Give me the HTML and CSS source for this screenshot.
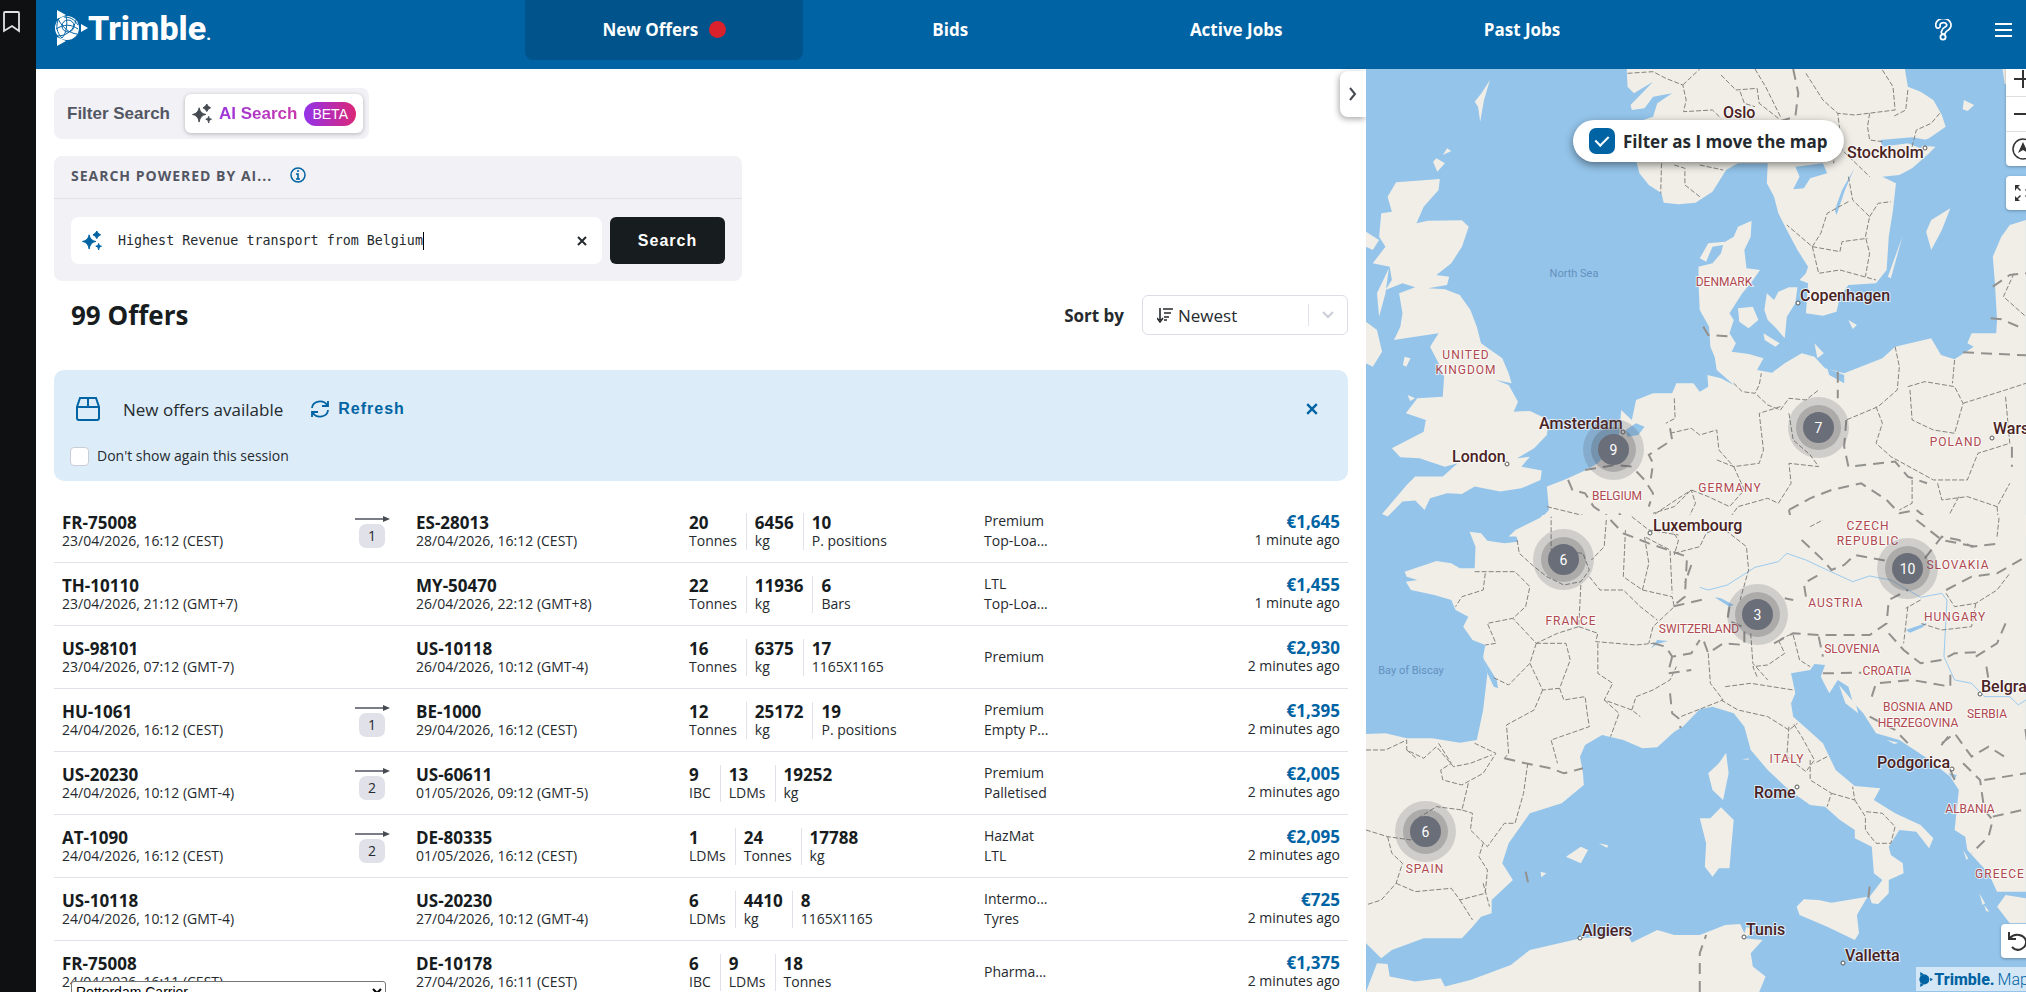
FILE: index.html
```html
<!DOCTYPE html>
<html lang="en">
<head>
	<meta charset="UTF-8" />
	<meta name="viewport" content="width=device-width, initial-scale=1.0" />
	<title>New Offers</title>
	<link rel="stylesheet" href="styles.css">
</head>
<body>
	<!-- shared icons -->
	<svg class="defs" aria-hidden="true">
		<symbol id="globe" viewBox="0 0 34 36">
			<path fill="currentColor" d="M3 0l9 5-9 4zM3 27l9 4-9 5zM27 14l7 4-7 4z"/>
			<circle cx="13" cy="18" r="12" fill="currentColor"/>
			<g class="globe-lines">
				<path d="M5 8c-4 8-2 15 3 20M8 28c4-4 6-13 4-22M2 19c8-5 15-5 22 0M4 9c5 9 11 14 19 15M22 10c-2 10-9 16-19 16M10 7c6 0 10 2 14 8"/>
				<circle cx="14" cy="16" r="6"/>
			</g>
		</symbol>
		<symbol id="sparkle" viewBox="0 0 20 20">
			<path fill="currentColor" d="M7 4q1 6 7 7q-6 1-7 8q-1-7-7-8q6-1 7-7zM15 0q1 3 4 4q-3 1-4 4q-1-3-4-4q3-1 4-4zM17 13q0 3 3 3q-3 0-3 4q0-4-3-4q3 0 3-3z" stroke="currentColor" stroke-linejoin="round"/>
		</symbol>
		<symbol id="cross" viewBox="0 0 10 10">
			<path d="M1 1l8 8M9 1l-8 8" stroke="currentColor" stroke-width="2" fill="none"/>
		</symbol>
		<symbol id="arrow" viewBox="0 0 35 8">
			<path d="M0 4h30" stroke="#5b5d68" stroke-width="1.6"/>
			<path d="M28 1l7 3-7 3z" fill="#464b52"/>
		</symbol>
	</svg>

	<div class="app">
		<aside class="rail">
			<button type="button" aria-label="Bookmarks">
				<svg width="17" height="22" viewBox="0 0 17 22"><path d="M1 2q0-1 1-1h13q1 0 1 1v18l-7-5-8 5z" fill="none" stroke="#e3e3e3" stroke-width="1.8"/></svg>
			</button>
		</aside>

		<div class="page">
			<header class="topbar">
				<a href="#" class="logo" aria-label="Trimble"><svg width="34" height="36"><use href="#globe"/></svg><span>Trimble<small>.</small></span></a>
				<nav class="tabs">
					<a href="#" class="tab active">New Offers <i class="dot"></i></a>
					<a href="#" class="tab">Bids</a>
					<a href="#" class="tab">Active Jobs</a>
					<a href="#" class="tab">Past Jobs</a>
				</nav>
				<div class="tools">
					<button type="button" aria-label="Help">
						<svg width="17" height="22" viewBox="0 0 17 22" fill="none" stroke="#fff"><path d="M3 7a5.500 4.500 0 1 1 8 3q-2 1-2.500 3" stroke-width="6" stroke-linecap="round"/><path d="M3 7a5.500 4.500 0 1 1 8 3q-2 1-2.500 3" stroke="#0063a3" stroke-width="2.600" stroke-linecap="round"/><circle cx="8" cy="18" r="2.600" fill="#0063a3" stroke-width="1.800"/></svg>
					</button>
					<button type="button" aria-label="Menu">
						<svg width="17" height="14" viewBox="0 0 17 14"><path d="M0 1h17M0 7h17M0 13h17" stroke="#fff" stroke-width="2"/></svg>
					</button>
				</div>
			</header>

			<div class="content">
				<main class="offers">
					<div class="switch">
						<button type="button" class="switch-btn">Filter Search</button>
						<button type="button" class="switch-btn on">
							<svg width="20" height="19"><use href="#sparkle"/></svg>
							<span class="ai">AI Search</span>
							<span class="beta">BETA</span>
						</button>
					</div>

					<form class="search">
						<div class="search-head">
							<label for="prompt">SEARCH POWERED BY AI...</label>
							<svg width="16" height="16" viewBox="0 0 16 16"><circle cx="8" cy="8" r="7" fill="none" stroke="#0063a3" stroke-width="1.500"/><path d="M8 3v2M6 7h2v5M6 12h4" stroke="#0063a3" stroke-width="1.600" fill="none"/></svg>
						</div>
						<div class="search-body">
							<div class="prompt">
								<svg width="20" height="19"><use href="#sparkle"/></svg>
								<input type="text" id="prompt" value="Highest Revenue transport from Belgium" />
								<i class="caret"></i>
								<button type="button" class="clear" aria-label="Clear"><svg width="10" height="10"><use href="#cross"/></svg></button>
							</div>
							<button type="submit" class="go">Search</button>
						</div>
					</form>

					<div class="title-row">
						<h1>99 Offers</h1>
						<div class="sort">
							<label for="sort">Sort by</label>
							<div class="sort-box">
								<svg class="sort-icon" width="16" height="16" viewBox="0 0 16 16" fill="none" stroke="#252a2e" stroke-width="1.600"><path d="M3 1v12M0 11l3 4 3-4M6 2h10M7 6h7M7 10h5M7 13h3"/></svg>
								<select id="sort">
									<option>Newest</option>
								</select>
								<svg class="sort-chev" width="14" height="8" viewBox="0 0 14 8"><path d="M2 1l5 5 5-5" fill="none" stroke="#cbcdd6" stroke-width="2"/></svg>
							</div>
						</div>
					</div>

					<section class="notice">
						<div class="notice-row">
							<svg width="24" height="24" viewBox="0 0 24 24" fill="none" stroke="#0063a3" stroke-width="2"><path d="M4 1h16l3 9v11q0 2-2 2H3q-2 0-2-2V10zM1 10h22M12 1v9"/></svg>
							<span class="notice-text">New offers available</span>
							<button type="button" class="refresh">
								<svg width="18" height="18" viewBox="0 0 18 18" fill="none" stroke="#0063a3" stroke-width="1.800"><path d="M1 8a8 7 0 0 1 15-3M17 1v5h-6M17 10a8 7 0 0 1-15 3M1 17v-5h6"/></svg>
								Refresh
							</button>
							<button type="button" class="close" aria-label="Close"><svg width="12" height="12"><use href="#cross"/></svg></button>
						</div>
						<label class="again"><input type="checkbox" /> Don't show again this session</label>
					</section>

					<table class="list">
						<colgroup><col class="c-from"><col class="c-via"><col class="c-to"><col class="c-load"><col class="c-req"><col></colgroup>
						<tbody>
							<tr>
								<td><b>FR-75008</b><span>23/04/2026, 16:12 (CEST)</span></td>
								<td class="via"><svg width="35" height="8"><use href="#arrow"/></svg><em>1</em></td>
								<td><b>ES-28013</b><span>28/04/2026, 16:12 (CEST)</span></td>
								<td><div class="load"><p><b>20</b><span>Tonnes</span></p><p><b>6456</b><span>kg</span></p><p><b>10</b><span>P. positions</span></p></div></td>
								<td class="req"><span>Premium</span><span>Top-Loa...</span></td>
								<td class="price"><b>€1,645</b><span>1 minute ago</span></td>
							</tr>
							<tr>
								<td><b>TH-10110</b><span>23/04/2026, 21:12 (GMT+7)</span></td>
								<td class="via"></td>
								<td><b>MY-50470</b><span>26/04/2026, 22:12 (GMT+8)</span></td>
								<td><div class="load"><p><b>22</b><span>Tonnes</span></p><p><b>11936</b><span>kg</span></p><p><b>6</b><span>Bars</span></p></div></td>
								<td class="req"><span>LTL</span><span>Top-Loa...</span></td>
								<td class="price"><b>€1,455</b><span>1 minute ago</span></td>
							</tr>
							<tr>
								<td><b>US-98101</b><span>23/04/2026, 07:12 (GMT-7)</span></td>
								<td class="via"></td>
								<td><b>US-10118</b><span>26/04/2026, 10:12 (GMT-4)</span></td>
								<td><div class="load"><p><b>16</b><span>Tonnes</span></p><p><b>6375</b><span>kg</span></p><p><b>17</b><span>1165X1165</span></p></div></td>
								<td class="req"><span>Premium</span></td>
								<td class="price"><b>€2,930</b><span>2 minutes ago</span></td>
							</tr>
							<tr>
								<td><b>HU-1061</b><span>24/04/2026, 16:12 (CEST)</span></td>
								<td class="via"><svg width="35" height="8"><use href="#arrow"/></svg><em>1</em></td>
								<td><b>BE-1000</b><span>29/04/2026, 16:12 (CEST)</span></td>
								<td><div class="load"><p><b>12</b><span>Tonnes</span></p><p><b>25172</b><span>kg</span></p><p><b>19</b><span>P. positions</span></p></div></td>
								<td class="req"><span>Premium</span><span>Empty P...</span></td>
								<td class="price"><b>€1,395</b><span>2 minutes ago</span></td>
							</tr>
							<tr>
								<td><b>US-20230</b><span>24/04/2026, 10:12 (GMT-4)</span></td>
								<td class="via"><svg width="35" height="8"><use href="#arrow"/></svg><em>2</em></td>
								<td><b>US-60611</b><span>01/05/2026, 09:12 (GMT-5)</span></td>
								<td><div class="load"><p><b>9</b><span>IBC</span></p><p><b>13</b><span>LDMs</span></p><p><b>19252</b><span>kg</span></p></div></td>
								<td class="req"><span>Premium</span><span>Palletised</span></td>
								<td class="price"><b>€2,005</b><span>2 minutes ago</span></td>
							</tr>
							<tr>
								<td><b>AT-1090</b><span>24/04/2026, 16:12 (CEST)</span></td>
								<td class="via"><svg width="35" height="8"><use href="#arrow"/></svg><em>2</em></td>
								<td><b>DE-80335</b><span>01/05/2026, 16:12 (CEST)</span></td>
								<td><div class="load"><p><b>1</b><span>LDMs</span></p><p><b>24</b><span>Tonnes</span></p><p><b>17788</b><span>kg</span></p></div></td>
								<td class="req"><span>HazMat</span><span>LTL</span></td>
								<td class="price"><b>€2,095</b><span>2 minutes ago</span></td>
							</tr>
							<tr>
								<td><b>US-10118</b><span>24/04/2026, 10:12 (GMT-4)</span></td>
								<td class="via"></td>
								<td><b>US-20230</b><span>27/04/2026, 10:12 (GMT-4)</span></td>
								<td><div class="load"><p><b>6</b><span>LDMs</span></p><p><b>4410</b><span>kg</span></p><p><b>8</b><span>1165X1165</span></p></div></td>
								<td class="req"><span>Intermo...</span><span>Tyres</span></td>
								<td class="price"><b>€725</b><span>2 minutes ago</span></td>
							</tr>
							<tr>
								<td><b>FR-75008</b><span>24/04/2026, 16:11 (CEST)</span></td>
								<td class="via"></td>
								<td><b>DE-10178</b><span>27/04/2026, 16:11 (CEST)</span></td>
								<td><div class="load"><p><b>6</b><span>IBC</span></p><p><b>9</b><span>LDMs</span></p><p><b>18</b><span>Tonnes</span></p></div></td>
								<td class="req"><span>Pharma...</span></td>
								<td class="price"><b>€1,375</b><span>2 minutes ago</span></td>
							</tr>
						</tbody>
					</table>

					<button type="button" class="collapse" aria-label="Collapse list"><svg width="8" height="14" viewBox="0 0 8 14"><path d="M1 1l5 6-5 6" fill="none" stroke="#464b52" stroke-width="2"/></svg></button>
				</main>

				<section class="map" aria-label="Map">
					<svg class="map-canvas">
						<!-- northern half -->
						<g transform="translate(-6 -19) scale(.4247 .3333)">
							<g class="land">
								<path d="M85 397L188 387 185 420 150 470 133 520 160 512 240 511 256 530 240 590 215 640 180 675 210 680 205 705 160 715 200 718 235 735 260 780 275 830 285 880 335 925 350 970 357 1000 320 990 350 1005 372 1055 362 1085 400 1083 445 1110 440 1155 410 1195 370 1225 400 1220 380 1250 428 1262 425 1290 380 1315 330 1325 270 1310 240 1332 205 1330 165 1345 152 1380 130 1352 100 1355 65 1400 52 1392 80 1350 110 1305 130 1280 195 1280 230 1240 200 1250 175 1240 140 1225 95 1222 75 1195 150 1145 155 1110 108 1090 135 1045 195 1040 198 980 185 940 165 890 185 850 130 860 80 870 95 830 100 790 92 730 130 712 100 700 60 720 75 690 70 650 30 640 60 590 45 560 50 490 75 485 65 440Z"/>
								<path d="M14 815L40 840 52 905 30 950 14 940zM14 545L45 570 30 600 14 590zM40 730L68 655 60 730 45 800zM105 920l14 5-10 25-8-5zM112 1035l18 10-12 8z"/>
								<path d="M306 90L292 150 283 215 278 170 270 155 286 130zM205 295l10 8-20 12zM180 325l20 15-18 25-10-30z"/>
								<path d="M628 57L630 110 645 130 690 95 660 135 637 165 640 180 670 175 690 140 735 130 700 160 690 200 655 215 650 330 658 370 680 405 710 430 715 458 750 463 790 458 830 425 862 360 890 340 960 340 958 400 975 440 985 490 1005 540 1030 600 1055 650 1050 670 1035 690 1055 700 1050 790 1090 797 1122 785 1130 740 1150 705 1215 700 1240 660 1245 560 1255 480 1262 400 1230 380 1270 375 1300 355 1340 310 1355 290 1300 285 1340 265 1379 230 1370 195 1350 150 1320 125 1290 110 1283 57Z"/>
								<path d="M922 512L920 560 905 600 910 655 942 660 920 700 900 730 885 760 870 790 880 810 870 850 885 880 875 905 915 912 950 925 935 960 970 968 1000 940 1040 910 1070 920 1095 955 1140 970 1230 925 1260 890 1345 865 1368 915 1400 928 1445 890 1430 880 1440 850 1498 850 1500 810 1495 700 1490 620 1510 560 1530 525 1568 510V1460H350L366 1440 430 1400 445 1380 440 1310 480 1290 530 1262 560 1240 590 1200 610 1160 615 1080 640 1110 650 1050 690 1030 735 1030 745 1000 785 1000 800 1025 820 1010 818 975 850 985 880 1005 840 960 835 920 825 890 822 830 800 780 797 700 797 650 830 640 850 610 855 585 830 590 815 635 800 625 820 580 860 575 880 560 890 530Z"/>
								<path d="M890 775L925 770 938 810 915 835 893 815zM958 730L975 750 985 725 1010 712 1030 712 1025 760 1005 800 1000 865 980 835 960 810 952 780zM950 850l38 30-10 10-25-20zM1345 510L1390 475 1370 540 1345 600 1333 545zM1277 560L1250 685 1243 680zM1150 810l20 15-10 12zM1070 880l22 30-15 15zM1422 150l24 15-15 18-12-5zM1513 57h55v60l-50-15z"/>
							</g>
							<g class="water">
								<path d="M1025 350L1090 340 1100 370 1060 385 1045 415 1020 418 1035 380zM1163 358L1142 420 1122 495 1118 480 1135 420zM1225 270L1300 262 1335 270 1320 295 1290 280 1230 290zM625 1140L650 1120 670 1130 655 1155 630 1160zM1100 955l40 20v25l-35-25z"/>
							</g>
							<g class="region">
								<path d="M630 70L690 65 720 85 760 105 768 150 762 185 830 180 850 205M760 105L800 57M850 75L885 120 935 115 940 160 985 205M930 57L955 110 990 200M895 125L905 160 930 170M1050 70L1090 150 1125 190 1135 300 1200 380M1230 60L1255 110 1260 180 1165 195 1125 190M1200 190L1195 230 1200 270 1230 275M1365 190L1345 220 1310 240 1300 290M1290 120L1285 180 1255 200M710 340L708 430M740 345L765 355 765 405 800 440M800 345L855 360M1150 380L1160 450 1200 500 1190 560 1200 610 1190 680M1200 500L1220 460 1250 455M1150 455L1100 490 1085 550 1065 590 1005 525M1065 590L1130 605 1135 575 1195 565M1065 590L1080 670 1130 660 1215 690M1120 290L1115 340"/>
								<path d="M880 1000L900 1025 930 1030 940 1005 945 970M935 1035L960 1065 990 1080 1010 1045 1050 1050 1080 1020M990 1070L940 1090 950 1200 940 1240 880 1250 840 1230M1010 1090L1020 1170 1060 1215 1080 1250 1010 1240 1015 1300 985 1360 960 1345 890 1370 850 1440M880 1250L905 1320 870 1370 820 1340 780 1320 740 1370 690 1390M1260 890L1270 950 1265 1020 1220 1070 1145 1110M1290 1010L1330 995 1400 1010 1420 1060 1400 1150 1350 1140 1300 1110 1295 1020M1420 1060L1520 1020 1568 1000M1400 930L1395 1000M1215 1070L1230 1120 1215 1180 1250 1220 1350 1290 1430 1290 1455 1210 1530 1180 1520 1040M1300 1290L1300 1360 1270 1380M1360 1300L1370 1350 1430 1340 1500 1370 1530 1300M440 1370L520 1395 580 1410M730 1150L780 1135 800 1155 840 1140 845 1200 880 1250M740 1045L742 1105 720 1120M1410 1340L1385 1400 1400 1440M1500 1370L1505 1440M1540 670L1515 740 1568 800M640 1440L720 1370 780 1320 790 1360 760 1440"/>
							</g>
							<g class="country">
								<path d="M1020 57L1032 130 1025 200 985 215M808 830L820 855 880 860M1125 965V1045M1145 1110L1140 1190 1150 1250 1260 1235 1290 1280 1335 1300M1420 907L1568 916M1490 710L1530 675 1568 670M1485 805L1510 808 1560 835M490 1290L500 1320 530 1330 550 1370 585 1400M730 1135L735 1170 680 1215 690 1240 685 1285M530 1260L600 1245 640 1250 670 1290 690 1330 680 1370M1010 1380L1060 1345 1110 1320 1180 1300 1240 1350 1270 1390 1310 1380 1350 1420M1010 1380L1020 1440M610 1390L640 1440M1535 1190V1250"/>
							</g>
						</g>
						<!-- southern half -->
						<g transform="translate(-6 441) scale(.4247 .3333)">
							<g class="land">
								<path d="M430 15L420 30 365 65 372 95 340 100 300 92 285 70 258 65 272 110 270 175 235 175 215 160 180 153 140 170 105 185 110 200 135 210 108 215 120 240 175 255 215 270 225 300 255 320 243 350 265 390 295 405 290 440 300 490 290 600 275 690 235 698 170 685 110 685 60 670 14 672V1300L50 1345 75 1320 150 1285 240 1285 265 1250 285 1220 310 1210 310 1170 360 1110 335 1060 350 1000 400 910 475 880 527 825 525 790 518 740 530 705 570 675 620 690 665 715 700 712 740 665 760 650 800 598 830 590 880 610 905 650 920 720 960 780 1010 840 1060 885 1095 890 1130 930 1165 960 1165 985 1205 1010 1210 1090 1230 1110 1200 1160 1205 1180 1220 1182 1245 1150 1245 1110 1280 1090 1278 1060 1250 1035 1245 1010 1270 960 1310 965 1340 1015 1350 985 1320 945 1260 910 1210 870 1225 835 1165 828 1120 780 1090 700 1060 665 1020 620 1015 580 1025 550 1015 490 1060 480 1070 462 1095 465 1085 500 1105 550 1125 510 1150 530 1160 575 1185 610 1215 670 1270 690 1330 740 1390 800 1410 840 1400 960 1425 980 1430 1020 1480 1090 1500 1145 1568 1145V15Z"/>
								<path d="M1500 1190L1520 1155 1568 1165V1240H1530zM862 728L868 790 855 870 830 840 820 790 845 760zM850 892L880 930 875 1000 870 1075 845 1075 830 1100 812 1070 815 1000 800 925 825 925zM1195 1160L1170 1215 1175 1270 1165 1290 1100 1250 1035 1215 1028 1190 1045 1168 1080 1170 1110 1178zM485 1040L520 1010 537 1020 520 1060zM562 1000l22 6-2 8zM425 1085l14 5-12 12zM1128 525l40 60 5 25-30-30zM1420 1020l12 25-4 5zM1458 1150l14 30-6 5zM1470 1185l12 20-8-2zM1240 690l28 8-10 4zM900 748l16-3-2 4z"/>
								<path d="M14 1446L40 1360 65 1362 70 1400 130 1415 190 1405 200 1430 260 1410 355 1365 400 1320 520 1285 630 1275 640 1298 700 1260 740 1275 800 1275 860 1245 895 1242 905 1270 910 1250 930 1262 905 1285 948 1290 920 1330 925 1370 955 1400 940 1446Z"/>
							</g>
							<g class="water">
								<path d="M835 262L850 265 880 285 870 290zM685 415L700 390 725 393 700 402zM1285 360L1335 338 1325 352 1295 368zM1385 790l20 5-5 15zM290 445L322 510 325 535 315 530 300 490z"/>
							</g>
							<path class="river" d="M800 232L820 240 865 225 930 172 985 155 1005 130 1050 150 1100 180 1160 215 1200 198 1250 210 1320 262 1370 250 1382 270 1375 440 1400 510 1440 520 1470 560 1530 560 1550 585 1568 570"/>
							<g class="region">
								<path d="M270 185L365 185 400 230 390 290 360 325 300 340 320 400 295 405M295 190L290 240 240 260 225 290M370 90L375 130 410 170 440 200 480 225 520 215 540 180 525 130 450 120 450 20M540 200L565 240 620 240 660 290 700 330M520 225L515 350 465 370 415 400 360 325M515 350L560 370 555 395 650 405 690 400M415 400L400 460 350 525 310 500M400 460L430 540 470 535 495 450 485 400 415 400M430 540L410 600 345 645 350 730 340 745M470 535L480 570 530 560 535 610 540 650 450 690 465 760M560 400L560 490 595 520 575 570 640 600 660 620M575 570L610 610 590 680M640 600L650 560 690 540 730 510 745 470M580 30L575 110 545 150M625 60L620 200 665 240 735 260 740 290 690 350 680 400M665 240L680 160 670 80 730 120 735 250M740 130L800 110 815 70 850 50 910 110 915 180 895 270M730 55L750 90 740 135M640 20L680 60 750 75"/>
								<path d="M820 430L825 520 855 570 755 620M860 530L920 520 1020 540M935 500L925 470 960 465 1000 430 985 390 1020 370M920 370L925 460 960 510M1020 375L1035 450 1060 470M850 570L890 600 960 620 1010 660 1030 640M1010 650L1005 740 1050 785 1070 750 1040 680 1020 640M1060 750L1060 810 1110 850 1100 890M1100 740L1070 760M1110 850L1165 870 1160 830M1165 870L1190 920 1190 960 1215 1000 1250 1000 1260 950 1230 910 1190 905M1290 290L1280 400M1320 270L1285 295M1500 80L1505 20M1060 50L1090 30M1380 250L1400 290 1450 280 1500 240 1530 190M1450 280L1440 350 1370 360 1320 340"/>
								<path d="M14 720L60 720 110 690 110 720 150 745 180 710 220 770 260 760 310 735M110 720L135 748M185 700L215 760 190 780 195 810 240 825 290 790 320 730 270 700M255 820L240 900 180 890 130 930 120 990 65 980 14 960M395 760L385 850 365 940 340 940 300 1010 260 960 265 910 240 900M65 980L75 1030 100 1060 85 1120 50 1170 14 1185M85 1120L130 1145 215 1135 235 1170 295 1150 300 1080 280 1040 290 1000M235 1170L265 1230M290 1120L305 1190"/>
							</g>
							<g class="country">
								<path d="M590 30L620 70 680 100 770 140 765 260 735 290 820 265M780 165L765 220M690 400L720 410 735 440 780 430 800 390M735 440L725 490 780 480M870 290L865 330 900 350M810 395L820 430 855 400 905 405 905 350M1000 265L1020 270M975 400L1020 370 1080 375 1200 375 1240 340 1245 270 1290 240M1050 260L1045 220 1080 195M1040 90L1090 150 1110 180 1140 165 1165 135 1250 155M1080 380L1090 440M1245 370L1280 420 1320 460 1370 450 1400 430 1470 425M1090 490L1180 488M1330 145L1370 80 1410 90 1440 110 1510 100M1380 240L1440 200 1500 190 1568 140M1520 340L1500 400 1450 440M1310 30L1370 90 1450 110M1205 560L1215 520 1300 510 1390 530 1390 480M1200 620L1260 660 1290 700M1370 700L1400 670 1440 740 1480 710 1530 750M1420 760L1460 810 1470 900 1490 930 1480 980 1440 1030M1490 920L1560 900M1470 810L1568 790M1475 470L1480 510M1385 680L1360 720M730 550L735 610 750 625 755 655M340 745L390 760 450 775 480 790 525 775M800 1446L800 1330 815 1275M390 1085l8 45M1200 1130l-4 45M1570 690L1565 640M1390 780l10 30"/>
							</g>
						</g>
						<g class="sea-name">
							<text x="208" y="208">North Sea</text>
							<text x="45" y="605">Bay of Biscay</text>
						</g>
						<g class="nation">
							<text x="358" y="217">DENMARK</text>
							<text x="251" y="431">BELGIUM</text>
							<text x="333" y="564">SWITZERLAND</text>
							<text x="486" y="584">SLOVENIA</text>
							<text x="521" y="606">CROATIA</text>
							<text x="552" y="642">BOSNIA AND</text><text x="552" y="658">HERZEGOVINA</text>
							<text x="621" y="649">SERBIA</text>
							<text x="604" y="744">ALBANIA</text>
						</g>
						<g class="nation wide">
							<text x="100" y="290">UNITED</text><text x="100" y="305">KINGDOM</text>
							<text x="590" y="377">POLAND</text>
							<text x="364" y="423">GERMANY</text>
							<text x="502" y="461">CZECH</text><text x="502" y="476">REPUBLIC</text>
							<text x="592" y="500">SLOVAKIA</text>
							<text x="470" y="538">AUSTRIA</text>
							<text x="205" y="556">FRANCE</text>
							<text x="589" y="552">HUNGARY</text>
							<text x="421" y="694">ITALY</text>
							<text x="59" y="804">SPAIN</text>
							<text x="634" y="809">GREECE</text>
						</g>
						<g class="city">
							<circle cx="559" cy="79" r="2"/><circle cx="432" cy="234" r="2"/><circle cx="257" cy="363" r="2"/><circle cx="141" cy="395" r="2"/><circle cx="626" cy="369" r="2"/><circle cx="284" cy="464" r="2"/><circle cx="614" cy="625" r="2"/><circle cx="586" cy="700" r="2"/><circle cx="431" cy="718" r="2"/><circle cx="214" cy="869" r="2"/><circle cx="378" cy="868" r="2"/><circle cx="477" cy="894" r="2"/>
							<text x="357" y="49">Oslo</text>
							<text x="481" y="89">Stockholm</text>
							<text x="434" y="232">Copenhagen</text>
							<text x="173" y="360">Amsterdam</text>
							<text x="86" y="393">London</text>
							<text x="627" y="365">Warsaw</text>
							<text x="287" y="462">Luxembourg</text>
							<text x="615" y="623">Belgrade</text>
							<text x="511" y="699">Podgorica</text>
							<text x="388" y="729">Rome</text>
							<text x="216" y="867">Algiers</text>
							<text x="380" y="866">Tunis</text>
							<text x="479" y="892">Valletta</text>
						</g>
					</svg>

					<button type="button" class="pin p1">9</button>
					<button type="button" class="pin p2">7</button>
					<button type="button" class="pin p3">6</button>
					<button type="button" class="pin p4">10</button>
					<button type="button" class="pin p5">3</button>
					<button type="button" class="pin p6">6</button>

					<label class="follow"><input type="checkbox" checked /> Filter as I move the map</label>

					<div class="ctrl zoom">
						<button type="button" aria-label="Zoom in"><svg width="18" height="18" viewBox="0 0 18 18"><path d="M9 0v18M0 9h18" stroke="#333" stroke-width="2"/></svg></button>
						<button type="button" aria-label="Zoom out"><svg width="18" height="18" viewBox="0 0 18 18"><path d="M0 9h18" stroke="#333" stroke-width="2"/></svg></button>
						<button type="button" aria-label="Compass"><svg width="22" height="22" viewBox="0 0 22 22"><circle cx="11" cy="11" r="10" fill="none" stroke="#333" stroke-width="1.500"/><path d="M11 4l5 11-5-3-5 3z" fill="#333"/></svg></button>
					</div>
					<div class="ctrl full">
						<button type="button" aria-label="Full screen"><svg width="18" height="18" viewBox="0 0 18 18"><path d="M1 7V1h5L4 3l3 3-1 1-3-3zM1 12l2 2 3-3 1 1-3 3 2 2H1zM17 7V1h-5l2 2-3 3 1 1 3-3zM17 12l-2 2-3-3-1 1 3 3-2 2h5z" fill="#333"/></svg></button>
					</div>
					<div class="ctrl reset">
						<button type="button" aria-label="Reset view"><svg width="20" height="20" viewBox="0 0 20 20"><path d="M1 1v7h7M2 7a9 8 0 0 1 16 3a8 8 0 0 1-14 6" fill="none" stroke="#333" stroke-width="2"/></svg></button>
					</div>
					<div class="credit"><svg width="14" height="15"><use href="#globe"/></svg><b>Trimble.</b> Maps</div>
				</section>
			</div>
		</div>

		<select class="carrier" aria-label="Carrier">
			<option>Rotterdam Carrier</option>
		</select>
	</div>
</body>
</html>
```
FILE: styles.css
```css
* {
	box-sizing: border-box;
}

body {
	margin: 0;
	font-family: "Open Sans", "Noto Sans", sans-serif;
	font-size: 17px;
	color: #252a2e;
	background-color: #fff;
}

button {
	padding: 0;
	border: none;
	background: none;
	color: inherit;
	font-family: "Liberation Sans", Arial, sans-serif;
	font-size: 16px;
	cursor: pointer;
}

svg {
	display: block;
	flex: none;
}

.defs {
	position: absolute;
	width: 0;
	height: 0;
}

.app {
	display: flex;
	height: 100vh;
	overflow: hidden;
}

.rail {
	flex: none;
	width: 36px;
	padding: 11px 3px;
	background-color: #0f1012;
}

.page {
	flex: 1;
	min-width: 0;
	display: flex;
	flex-direction: column;
}

/* Header */
.topbar {
	flex: none;
	display: flex;
	height: 69px;
	padding: 0 14px 0 18px;
	background-color: #0063a3;
	color: #fff;
}

.logo {
	flex: 1;
	display: flex;
	height: 56px;
	align-items: center;
	color: #fff;
	font-family: Roboto, sans-serif;
	font-size: 34px;
	font-weight: 800;
	text-decoration: none;
}

.logo small {
	font-size: 16px;
}

.globe-lines {
	fill: none;
	stroke: #0063a3;
	stroke-width: 1;
}

.tabs {
	flex: none;
	display: flex;
	gap: 8px;
	width: 58%;
	margin-right: 274px;
}

.tab {
	flex: 1;
	display: flex;
	align-items: center;
	justify-content: center;
	gap: 11px;
	height: 60px;
	padding-bottom: 2px;
	border-radius: 0 0 8px 8px;
	color: #fff;
	font-weight: 700;
	text-decoration: none;
}

.tab.active {
	background-color: #00548b;
}

.dot {
	width: 17px;
	height: 17px;
	border-radius: 50%;
	background-color: #da212c;
}

.tools {
	display: flex;
	align-items: center;
	gap: 43px;
	height: 60px;
}

/* Offers column */
.content {
	flex: 1;
	min-height: 0;
	display: flex;
}

.offers {
	position: relative;
	flex: 1;
	min-width: 0;
	padding: 19px 18px 0;
}

.switch {
	display: flex;
	gap: 8px;
	width: max-content;
	padding: 6px;
	border-radius: 8px;
	background-color: #f1f1f6;
}

.switch-btn {
	display: flex;
	align-items: center;
	gap: 7px;
	height: 39px;
	padding: 0 7px;
	border-radius: 6px;
	color: #545763;
	font-size: 17px;
	font-weight: 700;
}

.switch-btn.on {
	background-color: #fff;
	color: #464b52;
	box-shadow: 0 1px 4px rgba(0, 0, 0, .25);
}

.ai {
	background: linear-gradient(90deg, #9b35dc, #c837ab);
	background-clip: text;
	color: transparent;
}

.beta {
	padding: 0 8px;
	border-radius: 12px;
	background: linear-gradient(90deg, #9333ea, #db2777);
	color: #fff;
	font-size: 14px;
	font-weight: 400;
	line-height: 24px;
}

.search {
	width: 688px;
	margin-top: 17px;
	border-radius: 8px;
	background-color: #f1f1f6;
}

.search-head {
	display: flex;
	align-items: center;
	gap: 18px;
	height: 43px;
	padding: 0 17px 4px;
	border-bottom: 1px solid #e0e1e9;
	color: #545763;
	font-size: 14px;
	font-weight: 700;
	letter-spacing: 1px;
}

.search-body {
	display: flex;
	gap: 8px;
	padding: 18px 17px 17px;
}

.prompt {
	flex: 1;
	display: flex;
	align-items: center;
	height: 47px;
	padding: 0 15px 0 11px;
	border-radius: 8px;
	background-color: #fff;
	color: #0063a3;
}

.prompt input {
	width: 38ch;
	box-sizing: content-box;
	margin-left: 16px;
	padding: 0;
	border: none;
	outline: none;
	color: #252a2e;
	font-family: "DejaVu Sans Mono", monospace;
}

.caret {
	width: 1px;
	height: 18px;
	background-color: #000;
}

.clear {
	margin-left: auto;
	color: #252a2e;
}

.go {
	width: 115px;
	border-radius: 6px;
	background-color: #171c1e;
	color: #fff;
	font-weight: 700;
	letter-spacing: 1px;
}

.title-row {
	display: flex;
	align-items: center;
	justify-content: space-between;
	height: 40px;
	margin-top: 14px;
	padding-left: 17px;
}

.title-row h1 {
	margin: 0;
	font-size: 26px;
	color: #171c1e;
}

.sort {
	display: flex;
	align-items: center;
	gap: 18px;
	font-weight: 700;
}

.sort-box {
	position: relative;
}

.sort-box select {
	appearance: none;
	width: 206px;
	height: 40px;
	padding-left: 35px;
	border: 1px solid #dcdde6;
	border-radius: 6px;
	background: linear-gradient(#e0e1e9, #e0e1e9) 165px 8px / 1px 22px no-repeat #fff;
	color: #252a2e;
	font-family: inherit;
	font-size: 17px;
}

.sort-icon,
.sort-chev {
	position: absolute;
	top: 12px;
	left: 15px;
	pointer-events: none;
}

.sort-chev {
	top: 16px;
	left: auto;
	right: 13px;
}

.notice {
	margin-top: 35px;
	padding: 25px 30px 15px 16px;
	border-radius: 10px;
	background-color: #dcedf9;
}

.notice-row {
	display: flex;
	align-items: center;
	height: 28px;
	padding-left: 6px;
	color: #0063a3;
}

.notice-text {
	margin: 0 28px 0 23px;
	color: #252a2e;
}

.refresh {
	display: flex;
	align-items: center;
	gap: 9px;
	font-weight: 700;
	letter-spacing: 1px;
}

.close {
	margin-left: auto;
}

.again {
	display: flex;
	align-items: center;
	gap: 8px;
	margin-top: 23px;
	font-size: 14px;
	line-height: 20px;
}

.again input,
.follow input {
	appearance: none;
	width: 19px;
	height: 19px;
	margin: 0;
	border: 1px solid #cbcdd6;
	border-radius: 4px;
	background-color: #fff;
}

/* Offers list */
.list {
	width: 100%;
	margin-top: 19px;
	border-collapse: separate;
	border-spacing: 0;
	table-layout: fixed;
}

.c-from {
	width: 284px;
}

.c-via {
	width: 68px;
}

.c-to {
	width: 275px;
}

.c-load {
	width: 295px;
}

.c-req {
	width: 180px;
}

.list td {
	height: 63px;
	padding: 0 8px;
	border-bottom: 1px solid #e0e1e9;
}

.list td:nth-child(3) {
	padding-left: 10px;
}

.list b,
.list span {
	display: block;
	font-size: 14px;
	line-height: 18px;
	white-space: nowrap;
}

.list b {
	font-size: 17px;
	line-height: 19px;
	color: #171c1e;
}

.list .via svg {
	margin: 0 auto;
}

.list .via em {
	display: block;
	width: 26px;
	margin: 1px auto 0;
	border-radius: 7px;
	background-color: #e0e1e9;
	font-size: 14px;
	font-style: normal;
	line-height: 24px;
	text-align: center;
}

.load {
	display: flex;
}

.load p {
	margin: 0;
	padding-right: 9px;
}

.load p + p {
	padding-left: 8px;
	border-left: 1px solid #e0e1e9;
}

.list .req span {
	line-height: 20px;
}

.list .price {
	text-align: right;
}

.list .price b {
	color: #0063a3;
	line-height: 18px;
}

.collapse {
	position: absolute;
	top: 2px;
	right: 0;
	display: flex;
	align-items: center;
	justify-content: center;
	width: 26px;
	height: 46px;
	border-radius: 8px 0 0 8px;
	background-color: #fff;
	box-shadow: -1px 2px 6px rgba(0, 0, 0, .35);
}

/* Map */
.map {
	position: relative;
	flex: none;
	width: 660px;
	overflow: hidden;
	background-color: #94c4ea;
}

.map-canvas {
	width: 100%;
	height: 100%;
	font-family: Roboto, sans-serif;
}

.land {
	fill: #f0eee7;
}

.water {
	fill: #94c4ea;
}

.river,
.region,
.country {
	fill: none;
}

.river {
	stroke: #9ccbee;
	stroke-width: 1;
	vector-effect: non-scaling-stroke;
}

.region path {
	stroke: #84837f;
	stroke-width: 1;
	stroke-dasharray: 5 2;
	vector-effect: non-scaling-stroke;
}

.country path {
	stroke: #92918e;
	stroke-width: 2;
	stroke-dasharray: 11 7;
	vector-effect: non-scaling-stroke;
}

.sea-name text,
.nation text,
.city text {
	paint-order: stroke;
	stroke: rgba(255, 255, 255, .7);
	stroke-width: 2px;
}

.sea-name text {
	fill: #6490bf;
	stroke: none;
	font-size: 11px;
	text-anchor: middle;
}

.nation text {
	fill: #b0484f;
	font-size: 12px;
	text-anchor: middle;
}

.nation.wide text {
	letter-spacing: 1px;
}

.city text {
	fill: #4a2324;
	font-size: 16px;
	font-weight: 500;
}

.city circle {
	fill: #fff;
	stroke: #555;
	stroke-width: 1;
}

.pin {
	position: absolute;
	width: 31px;
	height: 31px;
	border-radius: 50%;
	background-color: #6a6e79;
	box-shadow: 0 0 0 7px rgba(80, 82, 90, .28), 0 0 0 15px rgba(80, 82, 90, .2);
	color: #fff;
	font-family: Roboto, sans-serif;
	font-size: 14px;
}

.p1 { left: 232px; top: 365px; }
.p2 { left: 437px; top: 343px; }
.p3 { left: 182px; top: 475px; }
.p4 { left: 526px; top: 484px; }
.p5 { left: 376px; top: 530px; }
.p6 { left: 44px; top: 747px; }

.follow {
	position: absolute;
	top: 51px;
	left: 207px;
	display: flex;
	align-items: center;
	gap: 8px;
	height: 42px;
	padding: 0 16px;
	border-radius: 21px;
	background-color: #fff;
	box-shadow: 0 3px 8px rgba(0, 0, 0, .45);
	font-weight: 700;
	white-space: nowrap;
}

.follow input {
	width: 26px;
	height: 26px;
	border: none;
	border-radius: 7px;
	background-color: #0063a3;
}

.follow input::after {
	content: "";
	display: block;
	width: 6px;
	height: 11px;
	margin: 5px 0 0 9px;
	border: solid #fff;
	border-width: 0 2px 2px 0;
	transform: rotate(45deg);
}

.ctrl {
	position: absolute;
	right: -14px;
	width: 34px;
	border-radius: 4px;
	background-color: #fff;
	box-shadow: 0 1px 3px rgba(0, 0, 0, .3);
}

.ctrl button {
	display: flex;
	align-items: center;
	justify-content: center;
	width: 34px;
	height: 34px;
}

.ctrl button + button {
	height: 35px;
	border-top: 1px solid #ddd;
}

.zoom {
	top: -7px;
}

.full {
	top: 107px;
}

.reset {
	right: -9px;
	bottom: 34px;
}

.credit {
	position: absolute;
	right: -14px;
	bottom: 1px;
	display: flex;
	align-items: center;
	gap: 1px;
	height: 24px;
	padding: 0 3px;
	background-color: rgba(255, 255, 255, .6);
	color: #0063a3;
	font-family: Roboto, sans-serif;
	font-size: 16px;
	font-weight: 300;
}

.credit b {
	margin-right: 2px;
	font-weight: 800;
}

.credit .globe-lines {
	stroke: #fff;
}

/* Overlaps the bottom edge of the window */
.carrier {
	position: fixed;
	left: 71px;
	bottom: -10px;
	width: 315px;
	height: 21px;
	border: 1px solid #767676;
	border-radius: 3px;
	background-color: #fff;
	font-family: "Liberation Sans", Arial, sans-serif;
	font-size: 14px;
}
```
